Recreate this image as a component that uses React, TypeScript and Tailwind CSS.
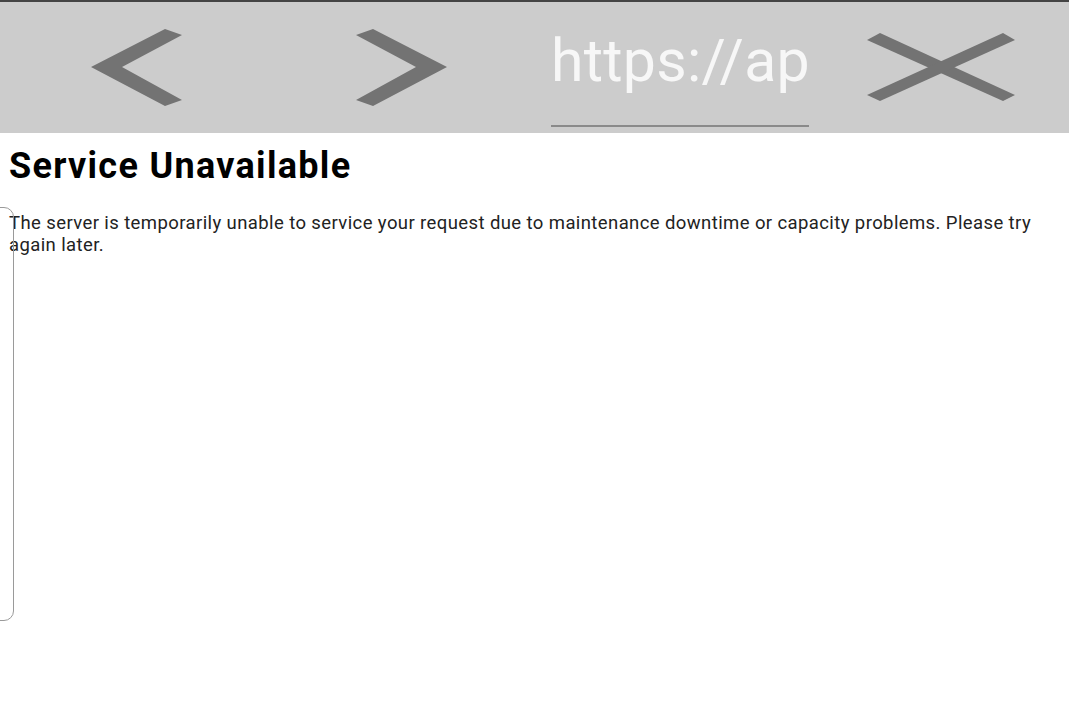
export default function App() {
  return (
    <div className="relative min-h-[710px] bg-white font-['Roboto',sans-serif] overflow-hidden">
      <div className="flex items-start h-[133px] bg-[#cccccc] border-t-2 border-[#444444]">
        <svg className="ml-[80px] mt-[18px] w-[110px] h-[95px]" viewBox="0 0 110 95">
          <polygon points="11,47 85,9 102,15 42,47 102,80 85,86" fill="#737373" />
        </svg>
        <svg className="ml-[155px] mt-[18px] w-[110px] h-[95px]" viewBox="0 0 110 95">
          <polygon points="102,47 28,9 11,15 71,47 11,80 28,86" fill="#737373" />
        </svg>
        <div className="ml-[96px] mt-[25px] w-[258px] flex flex-col">
          <div className="text-[59px] leading-[68px] tracking-[0.25px] text-[#f7f7f7] whitespace-nowrap">
            https://ap
          </div>
          <div className="mt-[30px] h-[2px] bg-[#8a8a8a]" />
        </div>
        <svg className="ml-[51px] mt-[23px] w-[165px] h-[85px]" viewBox="0 0 165 85">
          <polygon points="20,8 155,70 143,76 7,15" fill="#737373" />
          <polygon points="143,8 155,15 20,76 7,70" fill="#737373" />
        </svg>
      </div>
      <div className="pl-[9px] pr-[8px]">
        <h1 className="mt-[12px] text-[36px] leading-[42px] tracking-[1.3px] font-bold text-black">Service Unavailable</h1>
        <p className="mt-[25px] text-[18.5px] leading-[22px] tracking-[0.4px] text-[#222222]">
          The server is temporarily unable to service your request due to maintenance downtime or capacity problems. Please try again later.
        </p>
      </div>
      <div className="absolute left-[-20px] top-[207px] w-[34px] h-[414px] rounded-[10px] border-[1.5px] border-[#9a9a9a]" />
    </div>
  )
}
